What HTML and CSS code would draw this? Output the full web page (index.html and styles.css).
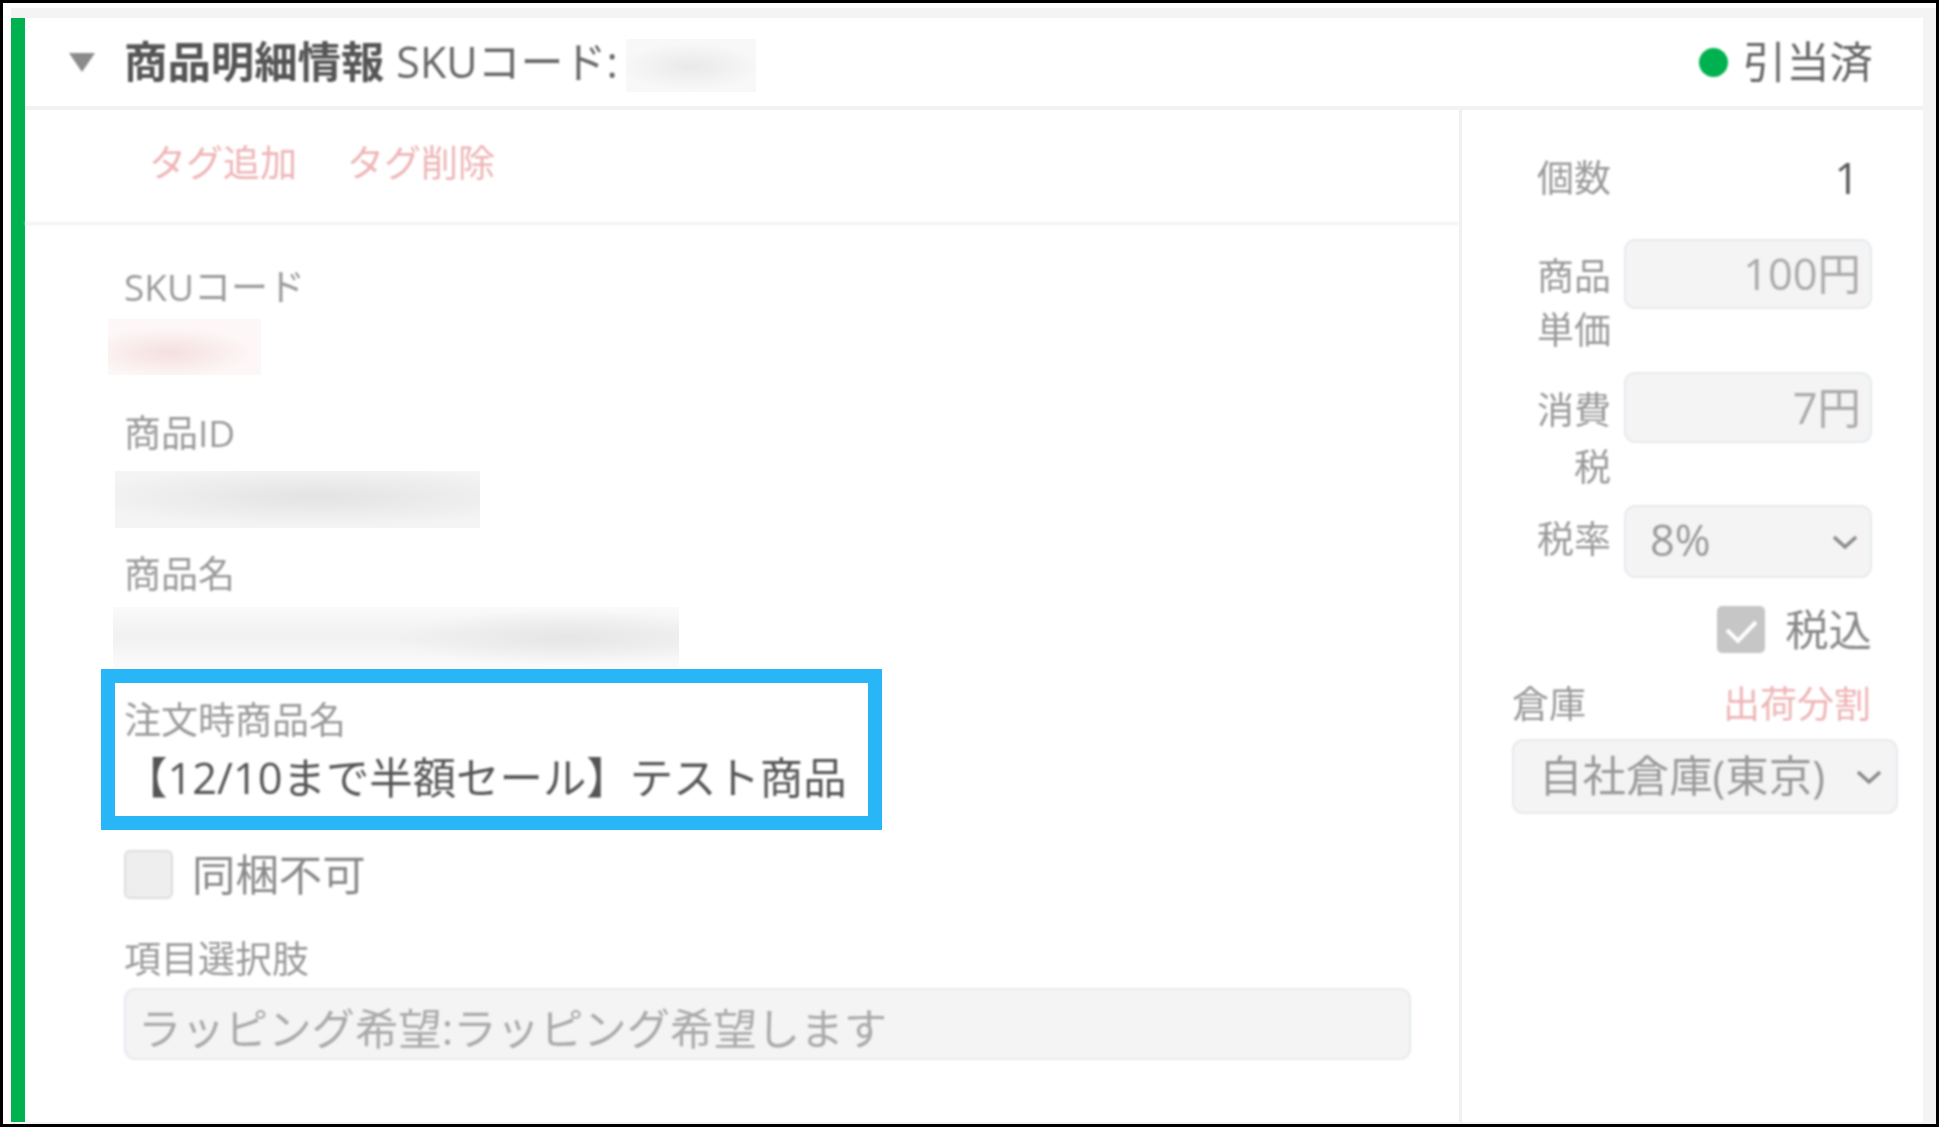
FILE: index.html
```html
<!DOCTYPE html>
<html lang="ja">
<head>
<meta charset="utf-8">
<title>商品明細情報</title>
<link rel="stylesheet" href="styles.css">
</head>
<body>
<div class="frame">
  <div class="panel">
    <header class="header">
      <div class="header-left soft">
        <svg class="caret" viewBox="0 0 26 19" aria-hidden="true"><path d="M0 0H26L13 19Z"/></svg>
        <span class="title">商品明細情報</span>
        <span class="sku">SKUコード:</span>
      </div>
      <div class="redact redact-head"></div>
      <div class="status soft"><span class="dot"></span><span>引当済</span></div>
    </header>
    <div class="columns">
      <section class="main">
        <div class="tags soft"><a class="link">タグ追加</a><a class="link">タグ削除</a></div>
        <div class="fields">
          <div class="label soft first">SKUコード</div>
          <div class="redact redact-sku"></div>
          <div class="label soft id">商品ID</div>
          <div class="redact redact-id"></div>
          <div class="label soft name">商品名</div>
          <div class="redact redact-name"></div>
          <div class="highlight">
            <div class="label soft">注文時商品名</div>
            <div class="value soft">【12/10まで半額セール】テスト商品</div>
          </div>
          <div class="check-row soft"><span class="checkbox"></span><span class="check-text">同梱不可</span></div>
          <div class="label soft options">項目選択肢</div>
          <div class="input wide soft">ラッピング希望:ラッピング希望します</div>
        </div>
      </section>
      <aside class="side">
        <div class="row row-qty soft"><div class="side-label">個数</div><div class="qty">1</div></div>
        <div class="row row-price soft"><div class="side-label wrap">商品単価</div><div class="input num">100円</div></div>
        <div class="row row-tax soft"><div class="side-label wrap tall">消費税</div><div class="input num">7円</div></div>
        <div class="row row-rate soft"><div class="side-label">税率</div>
          <div class="input select rate"><span>8%</span>
            <svg class="chev" viewBox="0 0 28 16" aria-hidden="true"><path d="M3 3L14 13L25 3"/></svg>
          </div>
        </div>
        <div class="incl soft">
          <span class="tick"><svg viewBox="0 0 48 47" aria-hidden="true"><path d="M10 24L21 35L39 16"/></svg></span>
          <span class="check-text">税込</span>
        </div>
        <div class="ware-head soft"><span class="side-label">倉庫</span><a class="link">出荷分割</a></div>
        <div class="input select ware soft"><span>自社倉庫(東京)</span>
          <svg class="chev" viewBox="0 0 28 16" aria-hidden="true"><path d="M3 3L14 13L25 3"/></svg>
        </div>
      </aside>
    </div>
  </div>
</div>
</body>
</html>
```
FILE: styles.css
```css
* { box-sizing: border-box; }
html, body { margin: 0; padding: 0; background: #fff; }
body { font-family: "Open Sans", "Noto Sans CJK JP", "Noto Sans", sans-serif; color: #777; }
.frame {
  width: 1939px;
  height: 1127px;
  border: 3px solid #000;
  padding: 15px 13px 2px 8px;
  background: linear-gradient(#fff 5px, transparent 5px), linear-gradient(90deg, #fff 8px, #f4f4f4 8px);
  overflow: hidden;
}
.soft { filter: blur(0.9px); }
.panel {
  height: 100%;
  background: #fff;
  border-left: 14px solid #00b14f;
  display: flex;
  flex-direction: column;
}
.header {
  height: 92px;
  flex: none;
  border-bottom: 4px solid #f2f2f2;
  display: flex;
  align-items: center;
  padding-left: 44px;
  padding-right: 50px;
}
.header-left { display: flex; align-items: center; }
.caret { width: 26px; height: 19px; fill: #8b8b8b; margin-right: 29px; }
.title { font-size: 43.4px; font-weight: 700; color: #555; line-height: 60px; }
.sku { font-size: 43px; color: #666; margin-left: 12px; line-height: 60px; }
.redact-head {
  width: 130px;
  height: 53px;
  margin: 7px 0 0 8px;
  background: radial-gradient(ellipse 60% 50% at 50% 52%, #e9e9e9, #f8f8f8 90%);
}
.status { margin-left: auto; display: flex; align-items: center; font-size: 43.4px; color: #666; line-height: 60px; }
.dot { width: 29px; height: 29px; border-radius: 50%; background: #00b14f; margin-right: 15px; }
.columns { flex: 1; display: flex; min-height: 0; }
.main { width: 1434px; flex: none; }
.tags {
  height: 115px;
  border-bottom: 3px solid #f2f2f2;
  padding-left: 124px;
  padding-top: 23px;
  display: flex;
  gap: 50px;
}
.link { font-size: 37px; color: #eeb4b6; line-height: 60px; }
.fields { padding-left: 99px; }
.label { font-size: 37px; line-height: 50px; color: #999; }
.label.first { margin-top: 37px; }
.label.id { margin-top: 33px; }
.label.name { margin-top: 21px; }
.label.options { margin-top: 35px; }
.redact-sku {
  width: 153px; height: 56px; margin: 7px 0 0 -16px;
  background: radial-gradient(ellipse 60% 50% at 40% 60%, #f5dfdf, #fdf7f7 90%);
}
.redact-id {
  width: 365px; height: 57px; margin: 13px 0 0 -9px;
  background: radial-gradient(ellipse 70% 55% at 55% 45%, #e3e3e3, #f4f4f4 95%);
}
.redact-name {
  width: 566px; height: 61px; margin: 8px 0 0 -11px;
  background: radial-gradient(ellipse 30% 45% at 80% 50%, #e6e6e6, transparent), linear-gradient(#fafafa, #f1f1f1 50%, #fbfbfb);
}
.highlight {
  width: 781px;
  height: 161px;
  margin: 1px 0 0 -23px;
  border: 14px solid #29b6f6;
  padding: 12px 0 0 9px;
}
.value { font-size: 43.4px; line-height: 60px; color: #555; margin-top: 3px; white-space: nowrap; }
.check-row { display: flex; align-items: center; margin-top: 20px; height: 49px; }
.checkbox {
  width: 49px; height: 49px;
  background: #eee;
  border: 2px solid #ddd;
  border-radius: 6px;
  margin-right: 19px;
}
.check-text { font-size: 43.4px; color: #888; line-height: 50px; }
.input {
  background: #f4f4f4;
  border: 2px solid #e6eaee;
  border-radius: 11px;
  font-size: 43.4px;
  color: #aaa;
  display: flex;
  align-items: center;
}
.wide { width: 1287px; height: 72px; margin-top: 4px; padding: 4px 0 0 12px; }
.side {
  flex: 1;
  border-left: 3px solid #f0f0f0;
  padding-left: 73px;
  padding-top: 43px;
}
.row { display: grid; grid-template-columns: 76px 248px; column-gap: 13px; align-items: start; }
.side-label { font-size: 37px; line-height: 50px; color: #999; text-align: right; white-space: nowrap; }
.side-label.wrap { white-space: normal; line-height: 54px; margin-top: 10px; word-break: break-all; }
.side-label.tall { line-height: 57px; margin-top: 9px; }
.row-price { margin-top: 36px; }
.row-tax { margin-top: 15px; }
.row-rate { margin-top: 10px; }
.row-rate .side-label { margin-top: 9px; }
.qty { font-size: 43px; line-height: 50px; color: #555; text-align: right; padding-right: 13px; }
.num { height: 70px; justify-content: flex-end; padding: 0 9px 5px 0; }
.row-tax .num { height: 71px; }
.select { justify-content: space-between; }
.rate { height: 73px; padding: 0 11px 0 24px; color: #999; }
.rate span { margin-bottom: 5px; }
.chev { width: 28px; height: 16px; fill: none; stroke: #888; stroke-width: 3.5; }
.incl { display: flex; align-items: center; justify-content: flex-end; width: 337px; margin-top: 28px; height: 47px; }
.tick {
  width: 48px; height: 47px;
  background: #c6c6c6;
  border-radius: 5px;
  margin-right: 20px;
}
.tick svg { width: 48px; height: 47px; display: block; fill: none; stroke: #fff; stroke-width: 4; }
.ware-head {
  display: flex;
  justify-content: space-between;
  align-items: center;
  width: 359px;
  margin: 26px 0 0 -23px;
  height: 50px;
}
.ware {
  width: 386px;
  height: 75px;
  margin: 10px 0 0 -23px;
  padding: 0 13px 0 25px;
  color: #999;
}
.ware span { margin-bottom: 6px; }
```
